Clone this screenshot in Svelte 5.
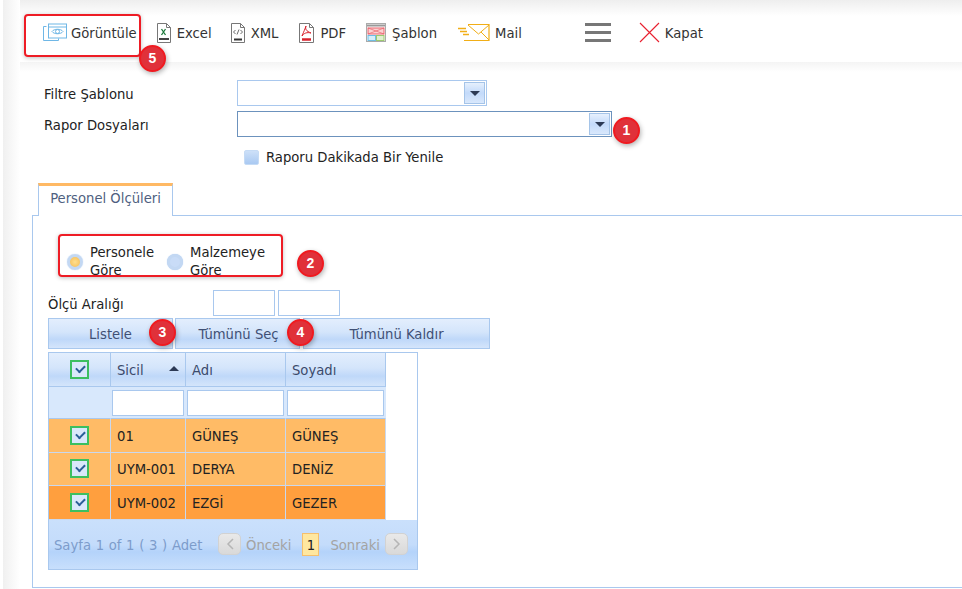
<script>
  const rows = [
    { sicil: '01', adi: 'GÜNEŞ', soyadi: 'GÜNEŞ', dark: false },
    { sicil: 'UYM-001', adi: 'DERYA', soyadi: 'DENİZ', dark: false },
    { sicil: 'UYM-002', adi: 'EZGİ', soyadi: 'GEZER', dark: true }
  ]
</script>

<div class="page">
  <div class="toolbar">
    <div class="tool first">
      <svg width="25" height="20" viewBox="0 0 25 20" fill="none" stroke="#6fb7e6">
        <path d="M4.500 3.500h-3v14h15v-2" />
        <rect x="6.500" y="1" width="18" height="14" fill="#fff" />
        <path d="M6.500 4h18" />
        <path d="M10 8.500c2-3 9-3 11 0c-2 3-9 3-11 0z" />
        <circle cx="15.500" cy="8.500" r="2" />
      </svg>
      <span>Görüntüle</span>
      <i class="box b5"></i>
      <b class="badge n5">5</b>
    </div>
    <div class="tool xl">
      <svg width="14" height="20" viewBox="0 0 14 20" fill="#fff" stroke="#777">
        <path d="M.5 .5h9l4 4v15H.500z" />
        <path d="M9.500 .5v4h4" fill="none" />
        <path d="M4.500 6l4 6M8.500 6l-4 6" stroke="#1d7a3c" stroke-width="1.300" />
        <path d="M2 16h10" stroke="#444" stroke-width="2" />
      </svg>
      <span>Excel</span>
    </div>
    <div class="tool xm">
      <svg width="14" height="20" viewBox="0 0 14 20" fill="#fff" stroke="#777">
        <path d="M.5 .5h9l4 4v15H.500z" />
        <path d="M9.500 .5v4h4" fill="none" />
        <path d="M4.500 7l-2 2l2 2M9.500 7l2 2l-2 2M6 11.500l2-5" fill="none" stroke="#444" stroke-width=".8" />
        <path d="M3 16.500h8" stroke="#333" stroke-width="2" />
      </svg>
      <span>XML</span>
    </div>
    <div class="tool">
      <svg width="15" height="20" viewBox="0 0 15 20" fill="#fff" stroke="#777">
        <path d="M.5 .5h10l4 4v15H.500z" />
        <path d="M10.500 .5v4h4" fill="none" />
        <path d="M7 3c-1 3 0 5 5 7c-4-1-7 0-9 3c2-5 3-7 4-10z" fill="none" stroke="#d9232e" />
        <path d="M3 16.500h9" stroke="#d9232e" stroke-width="2.500" />
      </svg>
      <span>PDF</span>
    </div>
    <div class="tool sb">
      <svg width="20" height="20" viewBox="0 0 20 20" fill="none">
        <rect x=".5" y=".5" width="19" height="18" stroke="#aaa" fill="#fff" />
        <path d="M1 2.500h18" stroke="#999" stroke-width="2" />
        <rect x="2" y="5" width="16" height="6" fill="#fbd3d3" stroke="#e9616a" />
        <path d="M2 5l16 6M18 5L2 11" stroke="#e9616a" stroke-width=".7" />
        <rect x="2" y="12.500" width="7.500" height="5" fill="#d5eefa" stroke="#6ebde3" />
        <rect x="10.500" y="12.500" width="7.500" height="5" fill="#dff0d0" stroke="#9cc96f" />
      </svg>
      <span>Şablon</span>
    </div>
    <div class="tool mail">
      <svg width="32" height="19" viewBox="0 0 32 19" fill="none" stroke="#f1ae17">
        <path d="M10 1.500h21v16H6" stroke-width="1.200" />
        <path d="M10 2l10.500 9l10.500-9M23 9l8 8" />
        <path d="M0 5.500h8M2 8.500h7M5 11.500h6" stroke-width="1.400" />
      </svg>
      <span>Mail</span>
    </div>
    <div class="menu"><i></i><i></i><i></i></div>
    <div class="tool close">
      <svg width="21" height="21" viewBox="0 0 21 21" fill="none">
        <path d="M1 1l19 19M20 1L1 20" stroke="#e8202f" stroke-width="1.100" />
      </svg>
      <span>Kapat</span>
    </div>
  </div>

  <div class="content">
    <div class="form">
      <div class="row">
        <label for="f1">Filtre Şablonu</label>
        <div class="combo small">
          <input id="f1" />
          <span class="drop"><i></i></span>
        </div>
      </div>
      <div class="row">
        <label for="f2">Rapor Dosyaları</label>
        <div class="combo focus">
          <input id="f2" />
          <span class="drop"><i></i></span>
          <b class="badge n1">1</b>
        </div>
      </div>
      <div class="check-row">
        <span class="square"></span>
        <span class="check-text">Raporu Dakikada Bir Yenile</span>
      </div>
    </div>

    <div class="tabs">
      <div class="tab">Personel Ölçüleri</div>
    </div>

    <div class="panel">
      <div class="radios">
        <div class="radio">
          <span class="dot on"></span>
          <span class="radio-text">Personele Göre</span>
        </div>
        <div class="radio">
          <span class="dot"></span>
          <span class="radio-text">Malzemeye Göre</span>
        </div>
        <i class="box b2"></i>
        <b class="badge n2">2</b>
      </div>

      <div class="range">
        <span class="range-label">Ölçü Aralığı</span>
        <input />
        <input />
      </div>

      <div class="buttons">
        <div class="btn b-list">Listele<b class="badge n3">3</b></div>
        <div class="btn b-all">Tümünü Seç<b class="badge n4">4</b></div>
        <div class="btn b-none">Tümünü Kaldır</div>
      </div>

      <div class="grid">
        <div class="line head">
          <div class="cell c0"><span class="cb"></span></div>
          <div class="cell c1">Sicil<i class="sort"></i></div>
          <div class="cell c2">Adı</div>
          <div class="cell c3">Soyadı</div>
        </div>
        <div class="line filter">
          <div class="cell c0"></div>
          <div class="cell c1"><input /></div>
          <div class="cell c2"><input /></div>
          <div class="cell c3"><input /></div>
        </div>
        {#each rows as r}
          <div class="line item" class:dark={r.dark}>
            <div class="cell c0"><span class="cb"></span></div>
            <div class="cell c1">{r.sicil}</div>
            <div class="cell c2">{r.adi}</div>
            <div class="cell c3">{r.soyadi}</div>
          </div>
        {/each}
        <div class="pager">
          <span class="info">Sayfa 1 of 1 ( 3 ) Adet</span>
          <span class="nav"><svg width="8" height="12" viewBox="0 0 8 12" fill="none" stroke="#b5b5b5" stroke-width="1.500"><path d="M7 1L2 6l5 5" /></svg></span>
          <span class="off prev">Önceki</span>
          <span class="num">1</span>
          <span class="off next">Sonraki</span>
          <span class="nav"><svg width="8" height="12" viewBox="0 0 8 12" fill="none" stroke="#b5b5b5" stroke-width="1.500"><path d="M1 1l5 5l-5 5" /></svg></span>
        </div>
      </div>
    </div>
  </div>
</div>

<style>
  :global(body) {
    margin: 0;
    background: #fff;
  }
  .page {
    width: 962px;
    height: 589px;
    overflow: hidden;
    position: relative;
    box-sizing: border-box;
    font-family: "DejaVu Sans Condensed", "DejaVu Sans", sans-serif;
    font-size: 14.67px;
    color: #222;
    background: #fff;
    padding-top: 12px;
  }
  .page::before {
    content: '';
    position: absolute;
    left: 3px;
    top: 0;
    width: 959px;
    height: 72px;
    background: linear-gradient(#eeeeee, #ffffff 16px, #ffffff 62px, #f4f4f4 62px, #fff 72px);
  }
  .page::after {
    content: '';
    position: absolute;
    left: 3px;
    top: 0;
    width: 17px;
    height: 589px;
    background: linear-gradient(90deg, #f0f0f0, #fff);
    pointer-events: none;
  }
  .toolbar {
    position: relative;
    z-index: 1;
    height: 50px;
    margin-left: 19px;
    display: flex;
    align-items: center;
    padding-left: 23px;
    padding-bottom: 9px;
    box-sizing: border-box;
    color: #333;
  }
  .tool {
    display: flex;
    align-items: center;
    gap: 6px;
    position: relative;
    margin-right: 20px;
  }
  .tool.first {
    gap: 4px;
    margin-right: 20px;
  }
  .tool.xl { margin-right: 19px; }
  .tool.xm { margin-right: 21px; }
  .tool.sb { margin-right: 21px; }
  .tool.mail {
    gap: 5px;
    margin-right: 0;
  }
  .menu {
    margin-left: 63px;
    width: 26px;
    display: flex;
    flex-direction: column;
    gap: 5px;
    margin-right: 28px;
  }
  .menu i {
    display: block;
    height: 3px;
    background: #777;
  }
  .tool.close {
    margin: 0;
    gap: 5px;
  }
  .box {
    position: absolute;
    border: 2px solid #ee1c25;
    border-radius: 4px;
    box-shadow: 0 1px 4px rgba(0, 0, 0, .25);
    box-sizing: border-box;
    pointer-events: none;
  }
  .b5 {
    left: -18px;
    top: -9px;
    width: 117px;
    height: 43px;
  }
  .badge {
    position: absolute;
    z-index: 5;
    width: 27px;
    height: 27px;
    border-radius: 50%;
    background: #e0313a;
    border: 2px solid #f01a20;
    box-sizing: border-box;
    color: #fff;
    font-family: "Liberation Sans", sans-serif;
    font-size: 14px;
    font-weight: 700;
    line-height: 23px;
    text-align: center;
    box-shadow: 1px 2px 5px rgba(0, 0, 0, .3);
  }
  .n5 { left: 97px; top: 22px; }
  .n1 { left: 375px; top: 5px; }
  .n2 { left: 249px; top: 16px; }
  .n3 { left: 100px; top: 0; }
  .n4 { left: 111px; top: 0; }

  .content {
    position: relative;
    z-index: 1;
    padding-top: 18px;
  }
  .form {
    padding-left: 44px;
  }
  .row {
    display: flex;
    align-items: center;
    margin-bottom: 5px;
  }
  .row label {
    width: 193px;
    color: #222;
  }
  .combo {
    position: relative;
    display: flex;
    width: 375px;
    height: 26px;
    box-sizing: border-box;
    border: 1px solid #6c92bd;
    background: #fff;
  }
  .combo.small {
    width: 250px;
    border-color: #a9c8ee;
  }
  .combo input {
    flex: 1;
    min-width: 0;
    border: 0;
    padding: 0;
    background: transparent;
  }
  .drop {
    width: 19px;
    height: 20px;
    margin: 1px 1px 1px 0;
    border: 1px solid #a5c4e8;
    background: linear-gradient(#e6f0fd, #c3dafa 50%, #d9e8fc);
    display: flex;
    align-items: center;
    justify-content: center;
  }
  .drop i {
    width: 0;
    height: 0;
    border: 5px solid transparent;
    border-top: 5px solid #2c3a55;
    border-bottom: 0;
  }
  .check-row {
    display: flex;
    align-items: center;
    gap: 7px;
    margin-left: 200px;
    margin-top: 12px;
    height: 16px;
    color: #222;
  }
  .check-text {
    position: relative;
    top: -1px;
  }
  .square {
    width: 15px;
    height: 15px;
    border-radius: 2px;
    background: linear-gradient(#cde0f8, #a9c9f2);
    border: 1px solid #c5dbf5;
    box-sizing: border-box;
  }
  .tabs {
    margin-top: 18px;
    margin-left: 32px;
    display: flex;
    border-bottom: 1px solid #a9c8ee;
    box-sizing: border-box;
    height: 33px;
    padding-left: 6px;
  }
  .tab {
    width: 135px;
    height: 33px;
    box-sizing: border-box;
    border: 1px solid #a9c8ee;
    border-top: 3px solid #ffb964;
    border-bottom: 0;
    background: #fff;
    color: #4f5f7f;
    text-align: center;
    line-height: 24px;
  }
  .panel {
    margin-left: 32px;
    height: 372px;
    box-sizing: border-box;
    border-left: 1px solid #a9c8ee;
    border-bottom: 1px solid #a9c8ee;
    padding: 18px 0 0 15px;
  }
  .radios {
    position: relative;
    display: flex;
    height: 43px;
    align-items: center;
    padding-left: 19px;
    gap: 13px;
    line-height: 18px;
  }
  .radio {
    display: flex;
    align-items: center;
    gap: 7px;
  }
  .radio:nth-child(1) { width: 87px; }
  .radio:nth-child(2) { width: 100px; }
  .radio-text {
    color: #222;
    flex: 1;
    position: relative;
    top: 5px;
  }
  .dot {
    flex: none;
    width: 16px;
    height: 16px;
    border-radius: 50%;
    border: 3px solid #c3d8f3;
    box-sizing: border-box;
    background: #c9dcf7;
    position: relative;
    top: 6px;
    box-shadow: 0 0 1px #a9c8ee;
  }
  .dot.on {
    background: radial-gradient(#ffdf8e, #f5bb53);
  }
  .b2 {
    left: 10px;
    top: 0;
    width: 225px;
    height: 43px;
  }
  .range {
    display: flex;
    align-items: center;
    margin-top: 12px;
    height: 27px;
  }
  .range-label {
    width: 165px;
    color: #222;
    position: relative;
    top: 1px;
  }
  .range input {
    width: 62px;
    height: 26px;
    box-sizing: border-box;
    border: 1px solid #a9c8ee;
    margin: 0 3px 0 0;
    padding: 0;
  }
  .buttons {
    display: flex;
    margin-top: 2px;
    height: 31px;
  }
  .btn {
    position: relative;
    height: 31px;
    box-sizing: border-box;
    border: 1px solid #a9c8ee;
    background: linear-gradient(#e3eefd, #d4e5fb 45%, #bfd8f9 70%, #d4e5fb);
    color: #3f5075;
    text-align: center;
    line-height: 29px;
  }
  .b-list { width: 125px; margin-right: 2px; }
  .b-all { width: 125px; margin-right: 3px; padding-left: 2px; }
  .b-none { width: 187px; }
  .grid {
    margin-top: 3px;
    width: 370px;
    height: 218px;
    box-sizing: border-box;
    border: 1px solid #a9c8ee;
    background: #fff;
    display: flex;
    flex-direction: column;
  }
  .line {
    display: flex;
    width: 337px;
  }
  .cell {
    box-sizing: border-box;
    border-right: 1px solid #a9c8ee;
    border-bottom: 1px solid #a9c8ee;
    padding-left: 6px;
    display: flex;
    align-items: center;
    position: relative;
  }
  .c0 { width: 62px; padding: 0; justify-content: center; }
  .c1 { width: 75px; }
  .c2 { width: 100px; }
  .c3 { width: 100px; }
  .head { height: 34px; }
  .head .cell {
    background: linear-gradient(#e3eefd, #d4e5fb 45%, #bfd8f9 70%, #d4e5fb);
    color: #3b4a6b;
    padding-bottom: 1px;
  }
  .head .c0 { padding-bottom: 0; }
  .sort {
    position: absolute;
    right: 6px;
    top: 13px;
    width: 0;
    height: 0;
    border: 5px solid transparent;
    border-bottom: 5px solid #2c3a55;
    border-top: 0;
  }
  .filter { height: 32px; }
  .filter .cell {
    background: #d8e8fc;
    padding: 0 1px;
    border-right-color: #d8e8fc;
  }
  .filter input {
    width: 100%;
    height: 26px;
    box-sizing: border-box;
    border: 1px solid #a9c8ee;
    padding: 0;
    margin: 0;
  }
  .item { height: 33.500px; }
  .item .cell {
    background: #ffbb66;
    border-color: #c9d8ee;
    color: #222;
  }
  .item.dark .cell { background: #ff9f3e; }
  .cb {
    display: block;
    width: 19px;
    height: 19px;
    box-sizing: border-box;
    border: 2px solid #3cbf60;
    background: #d9e8fb;
    position: relative;
  }
  .cb::after {
    content: '';
    position: absolute;
    left: 4px;
    top: 3px;
    width: 7px;
    height: 4px;
    border-left: 2px solid #2a5f99;
    border-bottom: 2px solid #2a5f99;
    transform: rotate(-45deg);
  }
  .pager {
    flex: 1;
    display: flex;
    align-items: center;
    background: linear-gradient(#cae0fc, #c4dcfb 50%, #b4d3fa 65%, #c8dffc);
    color: #a3a3a3;
    padding-left: 5px;
  }
  .info {
    color: #7d9ccb;
    width: 164px;
    flex: none;
    white-space: nowrap;
    word-spacing: .5px;
  }
  .nav {
    flex: none;
    width: 23px;
    height: 22px;
    border-radius: 5px;
    background: linear-gradient(#e9e9e9, #d9d9d9);
    border: 1px solid #d2d2d2;
    box-sizing: border-box;
    display: flex;
    align-items: center;
    justify-content: center;
  }
  .prev { margin: 0 11px 0 5px; }
  .next { margin: 0 5px 0 11px; }
  .num {
    flex: none;
    width: 17px;
    height: 23px;
    box-sizing: border-box;
    border: 1px solid #f5bf6c;
    background: #ffe79f;
    color: #222;
    text-align: center;
    line-height: 22px;
  }
</style>
